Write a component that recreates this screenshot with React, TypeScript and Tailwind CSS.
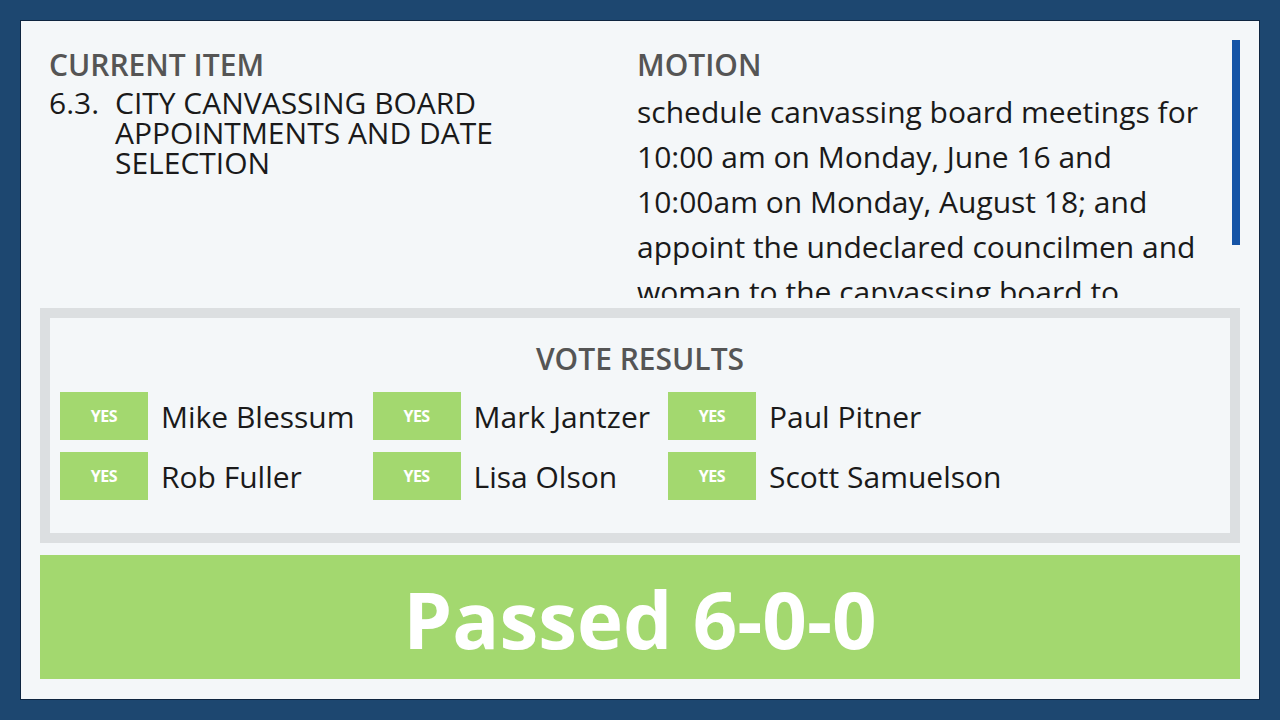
import React from "react"

const votes = [
  "Mike Blessum",
  "Mark Jantzer",
  "Paul Pitner",
  "Rob Fuller",
  "Lisa Olson",
  "Scott Samuelson",
]

const motion =
  "schedule canvassing board meetings for 10:00 am on Monday, June 16 and 10:00am on Monday, August 18; and appoint the undeclared councilmen and woman to the canvassing board to serve for the 2014 elections."

const App: React.FC = () => {
  return (
    <div className="w-[1280px] h-[720px] bg-[#1d4770] p-5 font-['Open_Sans',sans-serif]">
      <div className="h-full bg-[#f4f7f9] border border-[#0e2540] flex flex-col px-[19px] pt-[19px] pb-5">
        <div className="flex h-[268px] relative">
          <div className="w-[597px] pl-[9px] pt-[6px]">
            <div className="text-[30px] leading-[38px] font-semibold text-[#555]">CURRENT ITEM</div>
            <div className="flex text-[30px] leading-[30px] text-[#1a1a1a] mt-[4px]">
              <span className="w-[66px] shrink-0">6.3.</span>
              <span className="w-[420px]">CITY CANVASSING BOARD APPOINTMENTS AND DATE SELECTION</span>
            </div>
          </div>
          <div className="flex-1 h-[258px] pt-[6px] overflow-hidden">
            <div className="text-[30px] leading-[38px] font-semibold text-[#555]">MOTION</div>
            <div className="text-[30px] leading-[45px] text-[#1a1a1a] w-[562px] mt-[5px]">{motion}</div>
          </div>
          <div className="absolute right-0 top-0 w-2 h-[205px] bg-[#1554a6]" />
        </div>
        <div className="border-[10px] border-[#dcdfe1] bg-[#f4f7f9] h-[236px] px-[10px] pt-[20px]">
          <div className="text-center text-[30px] leading-[42px] font-semibold text-[#555]">VOTE RESULTS</div>
          <div className="grid grid-cols-[auto_auto_auto] justify-start gap-x-[18px] gap-y-3 mt-[12px]">
            {votes.map((name) => (
              <div key={name} className="flex items-center h-12">
                <div className="w-[88px] h-12 bg-[#a3d86f] flex items-center justify-center text-white text-[16px] font-bold tracking-[-0.5px]">
                  YES
                </div>
                <span className="ml-[13px] text-[30px] leading-[48px] mt-[2px] text-[#1a1a1a]">{name}</span>
              </div>
            ))}
          </div>
        </div>
        <div className="mt-3 h-[124px] bg-[#a3d86f] flex items-center justify-center">
          <span className="text-white text-[78px] font-bold leading-none mt-1">Passed 6-0-0</span>
        </div>
      </div>
    </div>
  )
}

export default App
